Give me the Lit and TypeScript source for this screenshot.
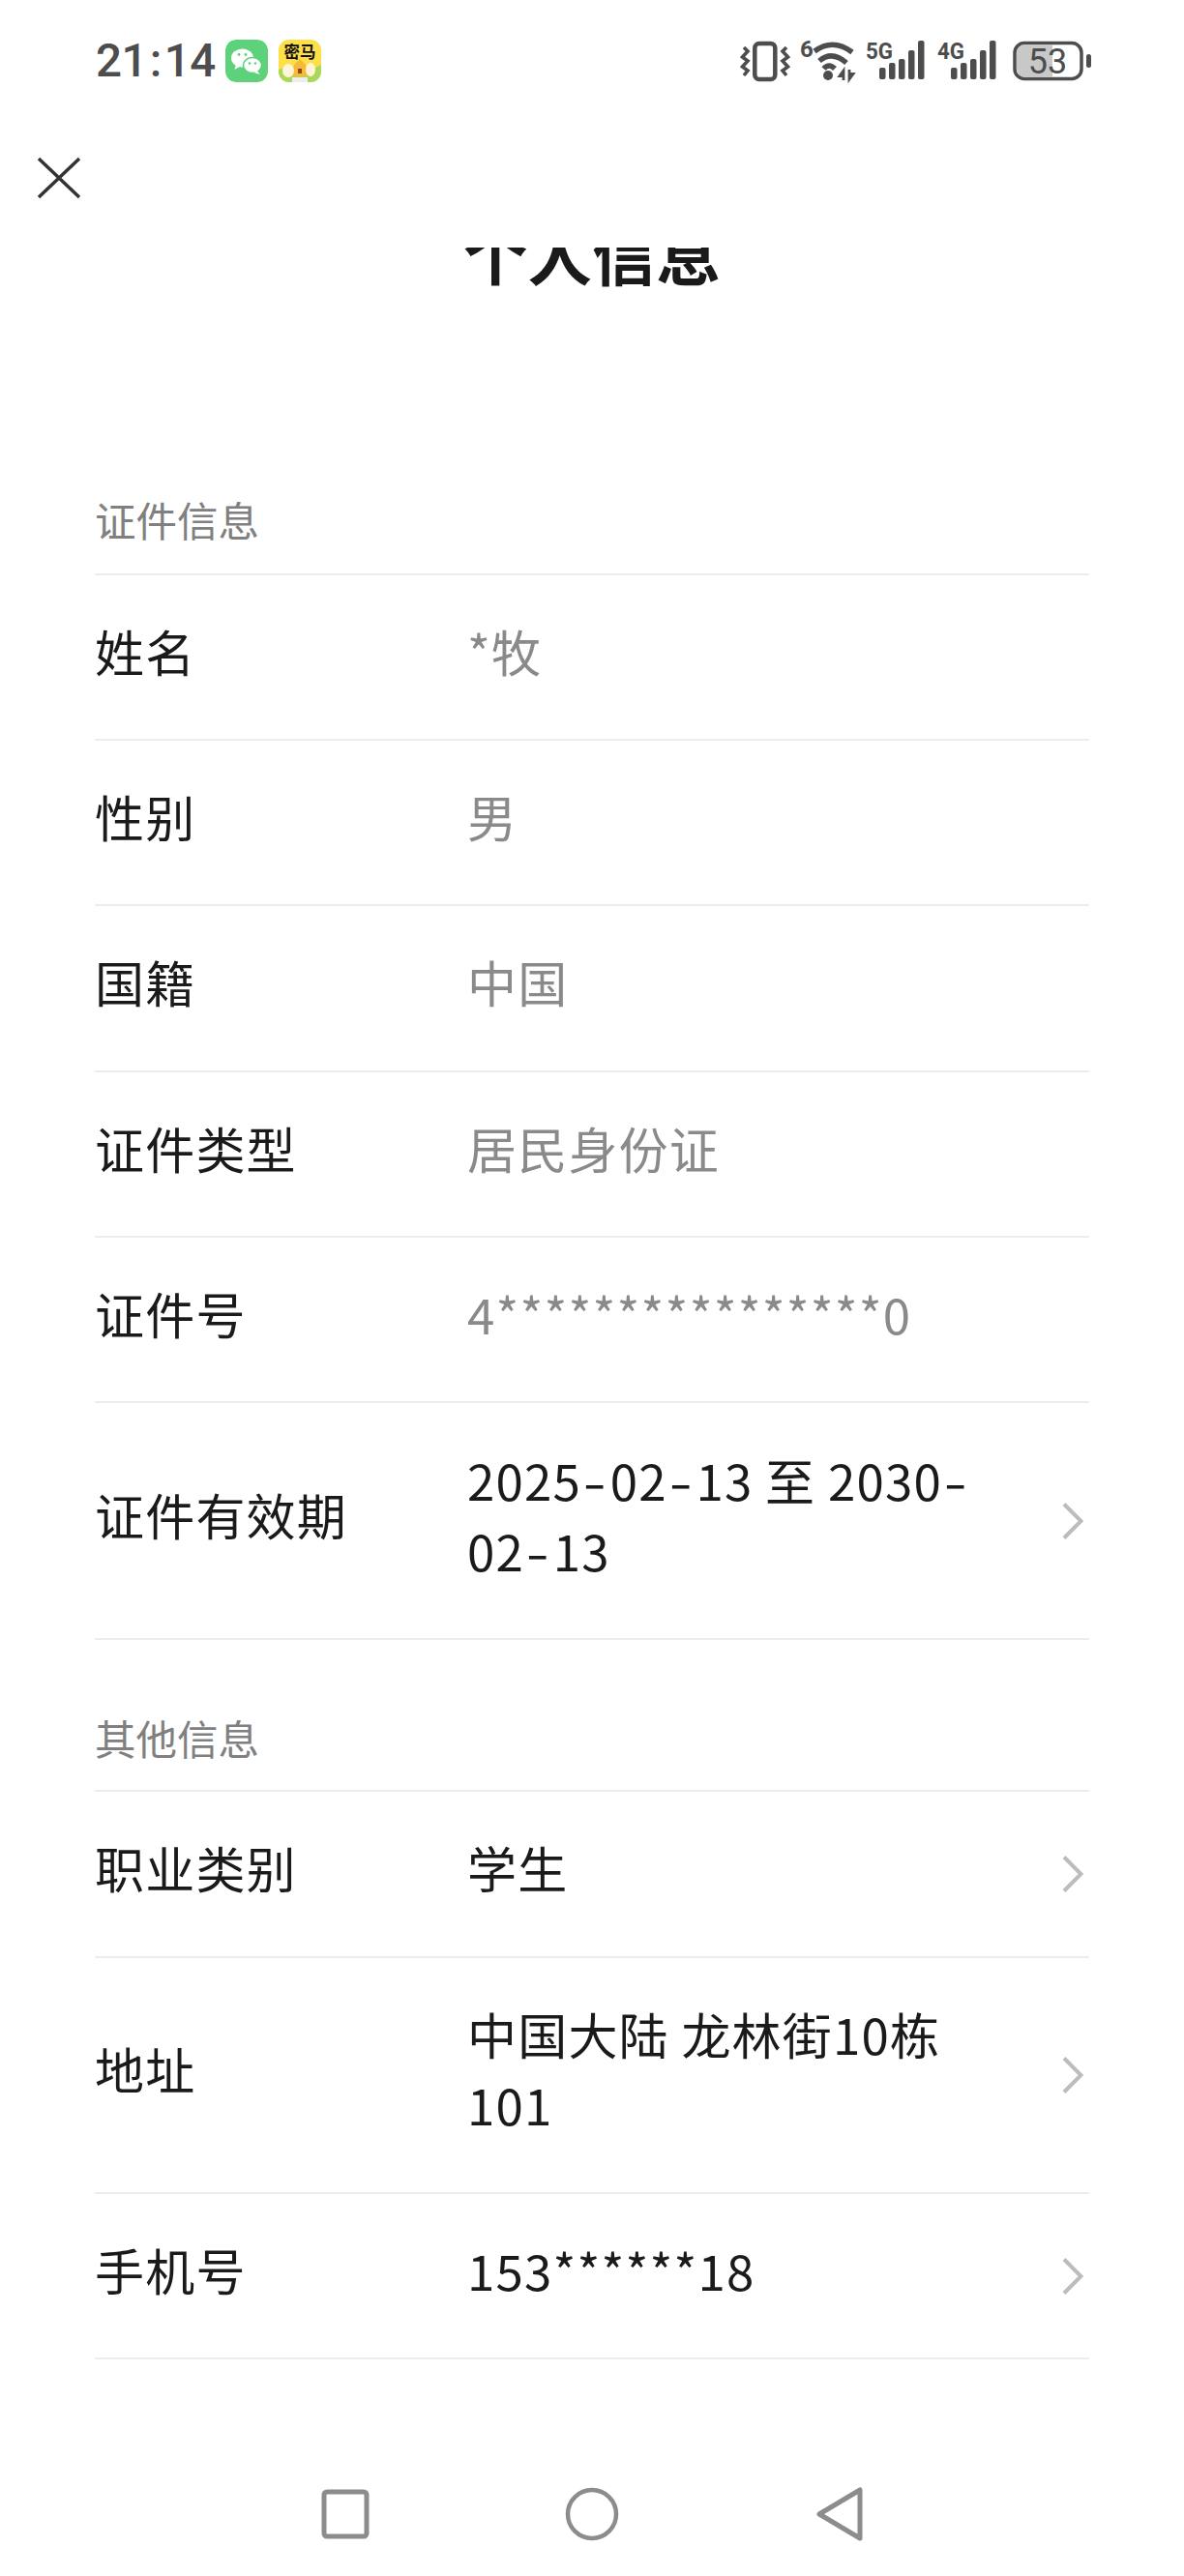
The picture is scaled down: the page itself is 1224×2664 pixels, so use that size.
import { LitElement, html, css, svg } from "lit";
import { customElement } from "lit/decorators.js";

type Row = { label: string; value: string; editable?: boolean };

const cert: Row[] = [
  { label: "姓名", value: "*牧" },
  { label: "性别", value: "男" },
  { label: "国籍", value: "中国" },
  { label: "证件类型", value: "居民身份证" },
  { label: "证件号", value: "4****************0" },
  { label: "证件有效期", value: "2025-02-13 至 2030-02-13", editable: true },
];
const other: Row[] = [
  { label: "职业类别", value: "学生", editable: true },
  { label: "地址", value: "中国大陆 龙林街10栋101", editable: true },
  { label: "手机号", value: "153******18", editable: true },
];

const bars = svg`<rect x="14" y="28" width="6.5" height="12" rx="2"/><rect x="24" y="23" width="6.5" height="17" rx="2"/><rect x="34" y="19" width="6.5" height="21" rx="2"/><rect x="44" y="10" width="6.5" height="30" rx="2"/><rect x="54" y="0" width="6.5" height="40" rx="2"/>`;

@customElement("app-root")
export class AppRoot extends LitElement {
  static styles = css`
    :host { display: block; width: 1224px; height: 2664px; background: #fff; overflow: hidden;
      font-family: "Noto Sans CJK SC", "Noto Sans", sans-serif; color: #1a1a1a; }
    .page { height: 2664px; display: flex; flex-direction: column; }
    .top { height: 256px; flex: none; display: flex; flex-direction: column; }
    .status { height: 124px; flex: none; display: flex; align-items: flex-start; padding: 41px 96px 0 99px; box-sizing: border-box; }
    .time { font: 500 47.5px/44px Roboto, sans-serif; color: #4d4d4d; letter-spacing: -0.6px; width: 134px; }
    .colon { margin: 0 3px; }
    .app { width: 44px; height: 44px; border-radius: 11px; margin-right: 11px; display: block; }
    .app2 { position: relative; overflow: hidden; background: #fde047; }
    .app2 svg { position: absolute; left: 0; top: 0; }
    .app2 span { position: relative; display: block; margin-top: 4px; text-align: center; font: 700 16.5px/17px "Noto Sans CJK SC", sans-serif; color: #111; white-space: nowrap; }
    .right { margin-left: auto; display: flex; align-items: flex-start; padding-top: 1px; }
    .i { display: block; flex: none; overflow: visible; }
    .close { margin: 38px 0 0 38px; width: 46px; height: 44px; display: block; }
    .scroll { flex: 1; overflow: hidden; }
    h1 { margin: -35px 0 0; font-size: 66.5px; line-height: 80px; font-weight: 700; text-align: center; color: #1a1a1a; }
    .content { padding: 0 98px 0 98px; }
    .sec { font-size: 42.5px; line-height: 60px; color: #808080; box-sizing: border-box; border-bottom: 2px solid #ececec; }
    .sec.first { height: 294.5px; padding-top: 207px; margin-top: -1px; }
    .sec.next { height: 157.5px; padding-top: 71px; }
    .row { display: flex; align-items: center; padding: 48.2px 0; border-bottom: 2px solid #ececec; }
    .k { width: 385px; flex: none; font-size: 51px; line-height: 73px; color: #1a1a1a; letter-spacing: 1.2px; margin: -6px 0 6px; }
    .v { width: 540px; flex: none; font-size: 51px; line-height: 73px; color: #8a8a8a; letter-spacing: 1.2px; margin: -6px 0 6px; }
    .v.on { color: #1a1a1a; }
    .hy { display: inline-block; transform: scaleX(1.35); margin: 0 5.400px; }
    .chev { margin-left: auto; margin-right: 6px; width: 22px; height: 38px; display: block; flex: none; }
    .nav { height: 221px; flex: none; display: flex; align-items: flex-start; justify-content: center; gap: 199px; box-sizing: border-box; }
    .nav svg { width: 56px; height: 56px; display: block; margin-top: 129px; }
  `;

  private val(text: string) {
    const parts = text.split("-");
    if (parts.length === 1) return text;
    return parts.map((p, i) =>
      i < parts.length - 1 ? html`${p}<span class="hy">-</span><wbr>` : p
    );
  }

  private row(r: Row) {
    return html`<div class="row">
      <div class="k">${r.label}</div>
      <div class="v ${r.editable ? "on" : ""}">${this.val(r.value)}</div>
      ${r.editable
        ? html`<svg class="chev" viewBox="0 0 22 38"><path d="M2 1.5 19.5 19 2 36.5" fill="none" stroke="#bcbcbc" stroke-width="4"/></svg>`
        : ""}
    </div>`;
  }

  render() {
    return html`<div class="page">
      <div class="top">
        <div class="status">
          <div class="time">21<span class="colon">:</span>14</div>
          <svg class="app" viewBox="0 0 44 44">
            <rect width="44" height="44" rx="11" fill="#5ed27b"/>
            <ellipse cx="17.500" cy="19" rx="11.500" ry="9.500" fill="#fff"/>
            <path d="M11 25l-1.500 6 7-4z" fill="#fff"/>
            <ellipse cx="28" cy="26.500" rx="9.500" ry="8" fill="#fff" stroke="#5ed27b" stroke-width="1.500"/>
            <path d="M33 32l2.500 4-6-2z" fill="#fff"/>
            <circle cx="14" cy="15.500" r="1.400" fill="#5ed27b"/><circle cx="21" cy="15.500" r="1.400" fill="#5ed27b"/>
            <circle cx="25" cy="24.500" r="1.300" fill="#5ed27b"/><circle cx="31" cy="24.500" r="1.300" fill="#5ed27b"/>
          </svg>
          <div class="app app2">
            <svg width="44" height="44" viewBox="0 0 44 44">
              <path d="M0 31q6-3 10 1l24 0q5-4 10-6v18H0z" fill="#a8d95a"/>
              <path d="M16 26l6-6 6 6 4 12H12z" fill="#f6b93b"/>
              <ellipse cx="10" cy="32" rx="6" ry="7" fill="#fff6d8"/>
              <ellipse cx="33" cy="31" rx="5" ry="7" fill="#fff6d8"/>
              <rect x="20" y="30" width="4" height="5" fill="#8a4b1c"/>
              <rect x="14" y="39" width="16" height="5" fill="#eee"/>
            </svg>
            <span>密马</span>
          </div>
          <div class="right">
            <svg class="i" width="48" height="42" viewBox="0 0 48 42" style="margin-right:12px" fill="none" stroke="#4d4d4d">
              <rect x="13.300" y="3" width="21" height="37" rx="4.500" stroke-width="4.500"/>
              <path d="M2 7l4 4-5.500 6L6 21l-5.500 6L6 31l-4 5M46 7l-4 4 5.500 6L42 21l5.500 6L42 31l4 5" stroke-width="3.600"/>
            </svg>
            <svg class="i" width="56" height="44" viewBox="0 0 56 44" style="margin-right:12px" fill="#4d4d4d">
              <text x="0" y="17" font-family="Roboto" font-weight="700" font-size="24">6</text>
              <g fill="none" stroke="#4d4d4d" stroke-width="5.500">
                <path d="M15 11Q34-3 54 12"/><path d="M20 21Q33 10 48 23"/><path d="M24.500 29Q30 23 36 29"/>
              </g>
              <circle cx="29" cy="36" r="5"/>
              <path d="M45 41V31l-4 5.500h4M51 30v10l4-5.500h-4" fill="none" stroke="#4d4d4d" stroke-width="2.800"/>
            </svg>
            <svg class="i" width="61" height="42" viewBox="0 0 61 42" style="margin-right:13px" fill="#4d4d4d">
              <text x="0" y="19" font-family="Roboto" font-weight="700" font-size="24" textLength="28" lengthAdjust="spacingAndGlyphs">5G</text>
              ${bars}
            </svg>
            <svg class="i" width="61" height="42" viewBox="0 0 61 42" style="margin-right:17px" fill="#4d4d4d">
              <text x="0" y="19" font-family="Roboto" font-weight="700" font-size="24" textLength="28" lengthAdjust="spacingAndGlyphs">4G</text>
              ${bars}
            </svg>
            <svg class="i" width="81" height="42" viewBox="0 0 81 42">
              <rect x="2" y="2.500" width="69" height="37" rx="10" fill="#fff" stroke="#4d4d4d" stroke-width="3.500"/>
              <path d="M4 13a9 9 0 0 1 9-9h28v34H13a9 9 0 0 1-9-9z" fill="#c8c8c8"/>
              <rect x="76" y="14" width="5" height="14" rx="2.500" fill="#4d4d4d"/>
              <text x="36" y="34" text-anchor="middle" font-family="Roboto" font-size="36" fill="#4d4d4d">53</text>
            </svg>
          </div>
        </div>
        <svg class="close" viewBox="0 0 46 44"><path d="M2 2 44 42M44 2 2 42" fill="none" stroke="#333" stroke-width="3.500"/></svg>
      </div>
      <div class="scroll">
        <h1>个人信息</h1>
        <div class="content">
          <div class="sec first">证件信息</div>
          ${cert.map((r) => this.row(r))}
          <div class="sec next">其他信息</div>
          ${other.map((r) => this.row(r))}
        </div>
      </div>
      <div class="nav">
        <svg viewBox="0 0 56 56"><rect x="6" y="5" width="44" height="46" rx="3" fill="none" stroke="#8c8c8c" stroke-width="5"/></svg>
        <svg viewBox="0 0 56 56"><circle cx="28" cy="28" r="25" fill="none" stroke="#8c8c8c" stroke-width="4.500"/></svg>
        <svg viewBox="0 0 56 56"><path d="M50 3v50L8 28z" fill="none" stroke="#8c8c8c" stroke-width="5" stroke-linejoin="round"/></svg>
      </div>
    </div>`;
  }
}
